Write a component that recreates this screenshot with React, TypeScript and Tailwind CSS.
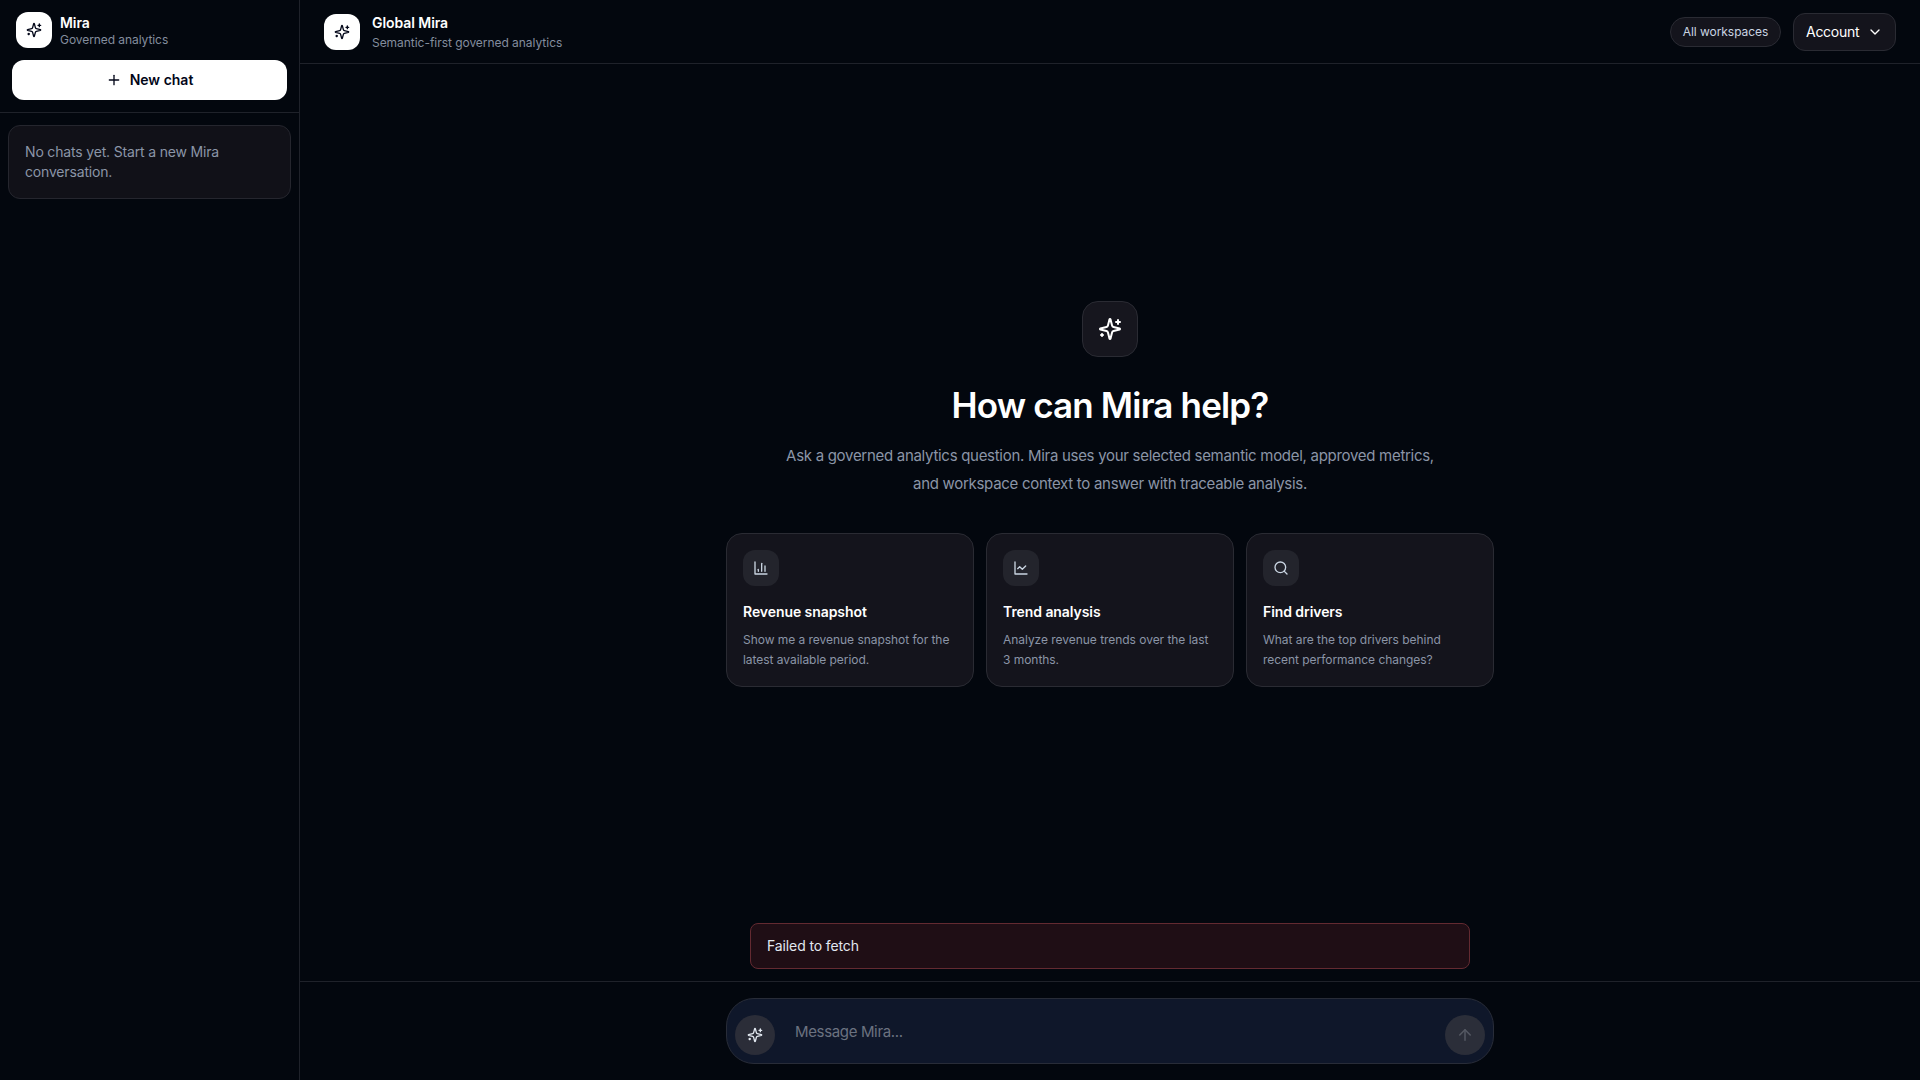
import type { ReactNode } from "react";
import { ArrowUp, ChevronDown, Plus, Search } from "lucide-react";

type IconProps = { className?: string };

function Glyph({ className, children }: IconProps & { children: ReactNode }) {
  return (
    <svg
      viewBox="0 0 24 24"
      fill="none"
      stroke="currentColor"
      strokeWidth={2}
      strokeLinecap="round"
      strokeLinejoin="round"
      className={className}
    >
      {children}
    </svg>
  );
}

function Sparkles({ className }: IconProps) {
  return (
    <Glyph className={className}>
      <path d="M9.937 15.5A2 2 0 0 0 8.5 14.063l-6.135-1.582a.5.5 0 0 1 0-.962L8.5 9.936A2 2 0 0 0 9.937 8.5l1.582-6.135a.5.5 0 0 1 .963 0L14.063 8.5A2 2 0 0 0 15.5 9.937l6.135 1.581a.5.5 0 0 1 0 .964L15.5 14.063a2 2 0 0 0-1.437 1.437l-1.582 6.135a.5.5 0 0 1-.963 0z" />
      <path d="M20 3v4" />
      <path d="M22 5h-4" />
      <path d="M4 17v2" />
      <path d="M5 18H3" />
    </Glyph>
  );
}

function BarChart({ className }: IconProps) {
  return (
    <Glyph className={className}>
      <path d="M3 3v18h18" />
      <path d="M18 17V9" />
      <path d="M13 17V5" />
      <path d="M8 17v-3" />
    </Glyph>
  );
}

function LineChart({ className }: IconProps) {
  return (
    <Glyph className={className}>
      <path d="M3 3v18h18" />
      <path d="m19 9-5 5-4-4-3 3" />
    </Glyph>
  );
}

const prompts = [
  { title: "Revenue snapshot", text: "Show me a revenue snapshot for the latest available period.", Icon: BarChart },
  { title: "Trend analysis", text: "Analyze revenue trends over the last 3 months.", Icon: LineChart },
  { title: "Find drivers", text: "What are the top drivers behind recent performance changes?", Icon: Search },
];

function Logo() {
  return (
    <div className="flex size-9 shrink-0 items-center justify-center rounded-xl bg-white text-slate-950">
      <Sparkles className="size-4" />
    </div>
  );
}

function Sidebar() {
  return (
    <aside className="flex w-[300px] shrink-0 flex-col border-r border-[#1f222a]">
      <div className="flex flex-col gap-3 border-b border-[#1f222a] p-3">
        <div className="flex h-9 items-center gap-2 px-1">
          <Logo />
          <div className="pt-px">
            <div className="text-sm leading-[19px] font-semibold tracking-[-0.07px] text-white">Mira</div>
            <div className="text-xs tracking-[-0.07px] text-[#838d9e]">Governed analytics</div>
          </div>
        </div>
        <button className="flex h-10 items-center justify-center gap-2 rounded-xl bg-white text-sm font-semibold text-slate-950">
          <Plus className="size-4" />
          New chat
        </button>
      </div>
      <div className="px-2 py-3">
        <div className="rounded-xl border border-[#25262e] bg-[#111118] p-4 text-sm tracking-[-0.17px] text-[#8b95a7]">
          No chats yet. Start a new Mira conversation.
        </div>
      </div>
    </aside>
  );
}

function Header() {
  return (
    <header className="flex h-16 shrink-0 items-center justify-between border-b border-[#1f222a] px-6">
      <div className="flex items-center gap-3">
        <Logo />
        <div>
          <div className="text-sm font-semibold tracking-[-0.07px] text-white">Global Mira</div>
          <div className="mt-0.5 text-xs tracking-[-0.04px] text-[#838d9e]">Semantic-first governed analytics</div>
        </div>
      </div>
      <div className="flex items-center gap-3">
        <span className="w-[111px] rounded-full border border-[#2a2b33] bg-[#14141c] py-1.5 text-center text-xs tracking-[-0.05px] whitespace-nowrap text-slate-300">
          All workspaces
        </span>
        <button className="flex w-[103px] items-center justify-between rounded-xl border border-[#2a2b33] bg-[#14141c] px-3 py-2 text-sm tracking-[-0.28px] text-white">
          Account
          <ChevronDown className="size-4" />
        </button>
      </div>
    </header>
  );
}

function Hero() {
  return (
    <div className="flex w-[768px] flex-col items-center">
      <div className="flex size-14 items-center justify-center rounded-2xl border border-[#2a2b33] bg-[#16161e] text-white">
        <Sparkles className="size-6" />
      </div>
      <h1 className="mt-7 text-[35px] leading-10 font-semibold tracking-[-0.84px] text-white">How can Mira help?</h1>
      <p className="mt-[17px] w-[672px] text-center text-[15px] leading-7 tracking-[-0.29px] text-[#8b95a7]">
        Ask a governed analytics question. Mira uses your selected semantic model, approved metrics, and workspace
        context to answer with traceable analysis.
      </p>
      <div className="mt-[35px] grid w-full grid-cols-3 gap-3">
        {prompts.map(({ title, text, Icon }) => (
          <button key={title} className="rounded-2xl border border-[#2a2b33] bg-[#14141c] p-4 text-left">
            <div className="flex size-9 items-center justify-center rounded-xl bg-[#23242c] text-slate-300">
              <Icon className="size-4" />
            </div>
            <div className="mt-4 text-sm font-semibold tracking-[-0.07px] text-white">{title}</div>
            <div className="mt-2 text-xs leading-5 tracking-[-0.04px] text-[#8b95a7]">{text}</div>
          </button>
        ))}
      </div>
    </div>
  );
}

export default function App() {
  return (
    <div className="flex h-screen bg-[#03070e] font-['Inter',sans-serif] text-slate-200">
      <Sidebar />
      <main className="flex min-w-0 flex-1 flex-col">
        <Header />
        <section className="flex flex-1 items-center justify-center">
          <Hero />
        </section>
        <div className="mx-auto mb-3 w-[720px] rounded-lg border border-[#632a31] bg-[#1f0e15] px-4 py-3 text-sm tracking-[-0.12px] text-slate-200">
          Failed to fetch
        </div>
        <footer className="border-t border-[#1f222a] py-4">
          <div className="mx-auto flex w-[768px] items-end rounded-[28px] border border-[#282c38] bg-[#0f172a] p-2">
            <button className="flex size-10 items-center justify-center rounded-full bg-[#2b2d38] text-slate-200">
              <Sparkles className="size-4" />
            </button>
            <div className="h-12 flex-1 px-5 py-3 text-[15px] leading-[26px] tracking-[-0.35px] text-[#6b7280]">Message Mira...</div>
            <button className="flex size-10 items-center justify-center rounded-full bg-[#2b2e39] text-[#555963]">
              <ArrowUp className="size-[18px]" />
            </button>
          </div>
        </footer>
      </main>
    </div>
  );
}
